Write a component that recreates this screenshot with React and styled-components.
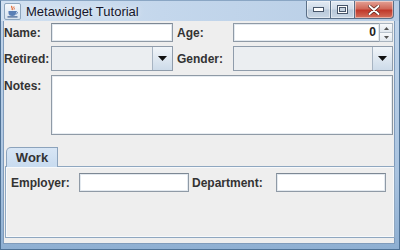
import React from "react";
import styled, { createGlobalStyle } from "styled-components";

const GlobalStyle = createGlobalStyle`
  html, body { margin: 0; padding: 0; background: #ffffff; }
  body { font-family: "Liberation Sans", Arial, sans-serif; }
  * { box-sizing: border-box; }
`;

const Window = styled.div`
  width: 400px;
  height: 250px;
  display: flex;
  flex-direction: column;
  background: linear-gradient(to bottom, #c3d6eb 0%, #a9c3df 70%, #8eafd2 100%);
  border: 1px solid #4f7296;
  border-top-color: #8aa6c4;
  overflow: hidden;
`;

const TitleBar = styled.div`
  height: 20px;
  display: flex;
  align-items: center;
  padding-left: 3px;
  background: linear-gradient(to right, #d2e1f1 0%, #c4d7ec 40%, #b7cde5 100%);
  flex-shrink: 0;
`;

const AppIcon = styled.div`
  width: 17px;
  height: 17px;
  border: 1px solid #8ea6be;
  border-radius: 2px;
  background: linear-gradient(to bottom, #f6f9fc, #d8e3ee);
  display: flex;
  align-items: center;
  justify-content: center;
`;

const Title = styled.span`
  margin-left: 5px;
  font-family: "Liberation Sans", Arial, sans-serif;
  font-size: 13px;
  color: #15152a;
  flex: 1;
  text-shadow: 0 0 6px rgba(255, 255, 255, 0.9);
`;

const Controls = styled.div`
  display: flex;
  align-self: flex-start;
  margin-right: 5px;
  height: 18px;
`;

const CtlButton = styled.div`
  width: ${(p) => p.$w}px;
  height: 18px;
  display: flex;
  align-items: center;
  justify-content: center;
  border: 1px solid #5a6f87;
  border-top: none;
  border-left-width: ${(p) => (p.$first ? 1 : 0)}px;
  border-bottom-left-radius: ${(p) => (p.$first ? 4 : 0)}px;
  border-bottom-right-radius: ${(p) => (p.$last ? 4 : 0)}px;
  background: ${(p) =>
    p.$close
      ? "linear-gradient(to bottom, #e4a296 0%, #d0695a 45%, #c0392b 55%, #d4705c 100%)"
      : "linear-gradient(to bottom, #e3ebf4 0%, #cfdbe8 45%, #b9c9da 55%, #c8d6e4 100%)"};
  box-shadow: inset 0 0 0 1px rgba(255, 255, 255, 0.45);
`;

const Body = styled.div`
  flex: 1;
  margin: 0 4px 5px 2px;
  background: #eeeeee;
  display: flex;
  flex-direction: column;
  border-bottom: 1px solid #7f9bbb;
  border-left: 1px solid #7f9bbb;
  border-right: 1px solid #7f9bbb;
`;

const Form = styled.div`
  display: grid;
  grid-template-columns: 47px 122px 60px 160px;
  grid-template-rows: 19px 25px 60px;
  row-gap: 4px;
  padding-top: 2px;
  padding-left: 0;
`;

const Label = styled.label`
  font-family: "Liberation Sans", Arial, sans-serif;
  font-weight: bold;
  font-size: 12px;
  color: #333333;
  display: flex;
  align-items: ${(p) => (p.$top ? "flex-start" : "center")};
  padding-top: ${(p) => (p.$top ? 4 : 0)}px;
  padding-left: ${(p) => p.$pl || 0}px;
  white-space: nowrap;
`;

const TextField = styled.div`
  background: #ffffff;
  border: 1px solid #8f9aa6;
  border-top-color: #7d8894;
  box-shadow: inset 0 0 0 1px #e3e9ef;
`;

const Spinner = styled.div`
  display: flex;
  height: 19px;
`;

const SpinValue = styled.div`
  flex: 1;
  background: #ffffff;
  border: 1px solid #8f9aa6;
  border-right: none;
  box-shadow: inset 0 0 0 1px #e3e9ef;
  font-family: "Liberation Sans", Arial, sans-serif;
  font-weight: bold;
  font-size: 12px;
  color: #222;
  text-align: right;
  padding-right: 3px;
  line-height: 17px;
`;

const SpinButtons = styled.div`
  width: 14px;
  display: flex;
  flex-direction: column;
  border: 1px solid #a9b4bf;
`;

const SpinButton = styled.div`
  flex: 1;
  display: flex;
  align-items: center;
  justify-content: center;
  background: linear-gradient(to bottom, #f7f9fb, #e2e8ee);
  border-top: ${(p) => (p.$down ? "1px solid #b8c2cc" : "none")};
`;

const Combo = styled.div`
  display: flex;
  height: 25px;
  border: 1px solid #8f9cab;
  background: #e9ecef;
`;

const ComboValue = styled.div`
  flex: 1;
  background: #ebeef1;
  border-right: 1px solid #a7b4c2;
`;

const ComboArrow = styled.div`
  width: 19px;
  display: flex;
  align-items: center;
  justify-content: center;
  background: linear-gradient(to bottom, #f1f5f9 0%, #dfe8f1 50%, #cddbe9 100%);
`;

const Notes = styled.div`
  grid-column: 2 / 5;
  background: #ffffff;
  border: 1px solid #8f9aa6;
  border-right-color: #8a949e;
  box-shadow: inset 0 0 0 1px #e8edf2;
`;

const Tabs = styled.div`
  margin-top: 12px;
  margin-left: 1px;
  width: 390px;
  display: flex;
  flex-direction: column;
`;

const TabStrip = styled.div`
  display: flex;
  padding-left: 1px;
  height: 19px;
`;

const Tab = styled.div`
  width: 52px;
  height: 20px;
  margin-bottom: -1px;
  position: relative;
  z-index: 1;
  background: linear-gradient(to bottom, #d8e6f5, #c8dbef);
  border: 1px solid #8ca3bc;
  border-bottom: none;
  border-top-left-radius: 5px;
  font-family: "Liberation Sans", Arial, sans-serif;
  font-weight: bold;
  font-size: 13px;
  color: #333333;
  display: flex;
  align-items: center;
  justify-content: center;
  padding-bottom: 1px;
`;

const TabPanel = styled.div`
  height: 72px;
  border: 1px solid #8fa7c0;
  box-shadow: inset 0 0 0 1px #f7f9fb;
  background: #eeeeee;
  display: grid;
  grid-template-columns: 72px 110px 87px 110px;
  grid-template-rows: 19px;
  padding: 6px 0 0 1px;
  align-content: start;
`;

function JavaIcon() {
  return (
    <svg width="13" height="13" viewBox="0 0 13 13">
      <path d="M6 1 C4.5 2.5 7.5 3 6 5" stroke="#e0602a" strokeWidth="1.2" fill="none" />
      <path d="M8 1.5 C7 2.6 9 3.2 8 4.6" stroke="#e0602a" strokeWidth="1" fill="none" />
      <path d="M2.5 6 H10 V8 C10 10 8.5 11 6.3 11 C4 11 2.5 10 2.5 8 Z" fill="#5a7fb5" />
      <path d="M10 6.6 C12 6.6 12 8.8 9.8 9" stroke="#5a7fb5" strokeWidth="1" fill="none" />
      <rect x="1.5" y="11.3" width="10" height="1.2" fill="#3f5f8f" />
    </svg>
  );
}

function DownTriangle({ w = 9, h = 5, color = "#111" }) {
  return (
    <svg width={w} height={h} viewBox={`0 0 ${w} ${h}`}>
      <polygon points={`0,0 ${w},0 ${w / 2},${h}`} fill={color} />
    </svg>
  );
}

function UpTriangle({ w = 5, h = 3, color = "#555" }) {
  return (
    <svg width={w} height={h} viewBox={`0 0 ${w} ${h}`}>
      <polygon points={`0,${h} ${w},${h} ${w / 2},0`} fill={color} />
    </svg>
  );
}

export default function App() {
  return (
    <>
      <GlobalStyle />
      <Window>
        <TitleBar>
          <AppIcon>
            <JavaIcon />
          </AppIcon>
          <Title>Metawidget Tutorial</Title>
          <Controls>
            <CtlButton $w={25} $first>
              <svg width="11" height="5" viewBox="0 0 11 5">
                <rect x="0.5" y="0.5" width="10" height="4" fill="#ffffff" stroke="#47566a" />
              </svg>
            </CtlButton>
            <CtlButton $w={24}>
              <svg width="11" height="9" viewBox="0 0 11 9">
                <rect x="0.5" y="0.5" width="10" height="8" fill="#ffffff" stroke="#47566a" />
                <rect x="2.5" y="2.5" width="6" height="4" fill="#c5d2df" stroke="#47566a" />
              </svg>
            </CtlButton>
            <CtlButton $w={39} $close $last>
              <svg width="12" height="10" viewBox="0 0 12 10">
                <path d="M1.5 1 L10.5 9 M10.5 1 L1.5 9" stroke="#4a1a12" strokeWidth="3.2" strokeLinecap="round" />
                <path d="M1.5 1 L10.5 9 M10.5 1 L1.5 9" stroke="#ffffff" strokeWidth="2" strokeLinecap="round" />
              </svg>
            </CtlButton>
          </Controls>
        </TitleBar>
        <Body>
          <Form>
            <Label>Name:</Label>
            <TextField />
            <Label $pl={4}>Age:</Label>
            <Spinner>
              <SpinValue>0</SpinValue>
              <SpinButtons>
                <SpinButton>
                  <UpTriangle />
                </SpinButton>
                <SpinButton $down>
                  <svg width="5" height="3" viewBox="0 0 5 3">
                    <polygon points="0,0 5,0 2.5,3" fill="#555" />
                  </svg>
                </SpinButton>
              </SpinButtons>
            </Spinner>

            <Label>Retired:</Label>
            <Combo>
              <ComboValue />
              <ComboArrow>
                <DownTriangle />
              </ComboArrow>
            </Combo>
            <Label $pl={4}>Gender:</Label>
            <Combo>
              <ComboValue />
              <ComboArrow>
                <DownTriangle />
              </ComboArrow>
            </Combo>

            <Label $top>Notes:</Label>
            <Notes />
          </Form>

          <Tabs>
            <TabStrip>
              <Tab>Work</Tab>
            </TabStrip>
            <TabPanel>
              <Label $pl={4}>Employer:</Label>
              <TextField />
              <Label $pl={3}>Department:</Label>
              <TextField />
            </TabPanel>
          </Tabs>
        </Body>
      </Window>
    </>
  );
}
